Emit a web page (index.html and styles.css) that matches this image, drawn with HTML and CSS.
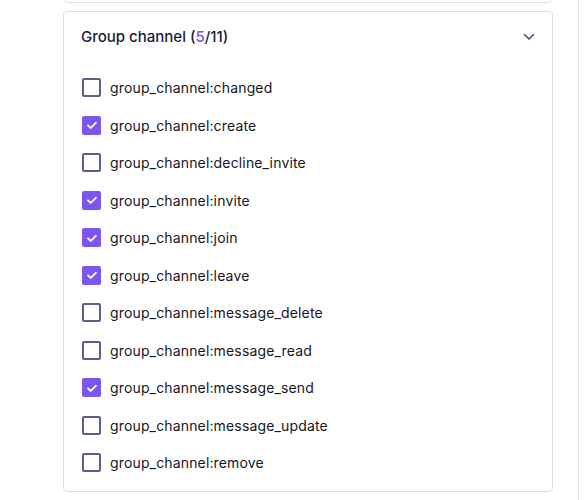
FILE: index.html
```html
<!DOCTYPE html>
<html>
<head>
<meta charset="utf-8">
<link rel="stylesheet" href="styles.css">
</head>
<body>
<div class="page">
  <div class="main">
    <div class="card prev"></div>
    <div class="card group">
      <div class="card-head">
        <div class="title">Group channel (<span class="count">5</span>/11)</div>
        <svg class="chevron" width="12" height="8" viewBox="0 0 12 8"><path d="M1.5 1.5 L6 6 L10.5 1.5" fill="none" stroke="#4a4c85" stroke-width="1.6" stroke-linecap="round" stroke-linejoin="round"/></svg>
      </div>
      <ul class="list">
        <li class="item"><span class="box"></span><span class="label">group_channel:changed</span></li>
        <li class="item"><span class="box on"><svg viewBox="0 0 18 18" width="18" height="18"><path d="M5 9.3 L7.8 12 L13 6.6" fill="none" stroke="#fff" stroke-width="1.8" stroke-linecap="round" stroke-linejoin="round"/></svg></span><span class="label">group_channel:create</span></li>
        <li class="item"><span class="box"></span><span class="label">group_channel:decline_invite</span></li>
        <li class="item"><span class="box on"><svg viewBox="0 0 18 18" width="18" height="18"><path d="M5 9.3 L7.8 12 L13 6.6" fill="none" stroke="#fff" stroke-width="1.8" stroke-linecap="round" stroke-linejoin="round"/></svg></span><span class="label">group_channel:invite</span></li>
        <li class="item"><span class="box on"><svg viewBox="0 0 18 18" width="18" height="18"><path d="M5 9.3 L7.8 12 L13 6.6" fill="none" stroke="#fff" stroke-width="1.8" stroke-linecap="round" stroke-linejoin="round"/></svg></span><span class="label">group_channel:join</span></li>
        <li class="item"><span class="box on"><svg viewBox="0 0 18 18" width="18" height="18"><path d="M5 9.3 L7.8 12 L13 6.6" fill="none" stroke="#fff" stroke-width="1.8" stroke-linecap="round" stroke-linejoin="round"/></svg></span><span class="label">group_channel:leave</span></li>
        <li class="item"><span class="box"></span><span class="label">group_channel:message_delete</span></li>
        <li class="item"><span class="box"></span><span class="label">group_channel:message_read</span></li>
        <li class="item"><span class="box on"><svg viewBox="0 0 18 18" width="18" height="18"><path d="M5 9.3 L7.8 12 L13 6.6" fill="none" stroke="#fff" stroke-width="1.8" stroke-linecap="round" stroke-linejoin="round"/></svg></span><span class="label">group_channel:message_send</span></li>
        <li class="item"><span class="box"></span><span class="label">group_channel:message_update</span></li>
        <li class="item"><span class="box"></span><span class="label">group_channel:remove</span></li>
      </ul>
    </div>
  </div>
  <div class="side"></div>
</div>
</body>
</html>
```
FILE: styles.css
```css
html, body {
  margin: 0;
  padding: 0;
  background: #fff;
}
body {
  font-family: Inter, "Noto Sans", sans-serif;
  color: #121217;
}
.page {
  display: flex;
  width: 587px;
  height: 500px;
  overflow: hidden;
}
.main {
  width: 579px;
  padding-left: 63px;
  box-sizing: border-box;
}
.side {
  width: 8px;
  border-left: 1px solid #dfe1ef;
}
.card {
  width: 490px;
  box-sizing: border-box;
  border: 1px solid #dcdeee;
  border-radius: 4px;
  background: #fff;
}
.prev {
  height: 12px;
  margin-top: -9px;
}
.group {
  margin-top: 8px;
  height: 481px;
}
.card-head {
  display: flex;
  align-items: center;
  justify-content: space-between;
  height: 49px;
  padding: 0 17px 0 17px;
}
.title {
  font-size: 15px;
  font-weight: 500;
  color: #1c1c3a;
}
.count {
  color: #7b55ee;
}
.chevron {
  display: block;
}
.list {
  list-style: none;
  margin: 0;
  padding: 8px 0 0 18px;
}
.item {
  display: flex;
  align-items: center;
  gap: 9px;
  height: 37.5px;
}
.box {
  width: 19px;
  height: 19px;
  box-sizing: border-box;
  border: 2px solid #5b5f8d;
  border-radius: 2px;
  flex: none;
  position: relative;
}
.box.on {
  background: #7b55ee;
  border-color: #7b55ee;
}
.box.on svg {
  position: absolute;
  left: -1.5px;
  top: -1.5px;
}
.label {
  font-size: 14px;
  color: #16161d;
  letter-spacing: 0.15px;
}
```
